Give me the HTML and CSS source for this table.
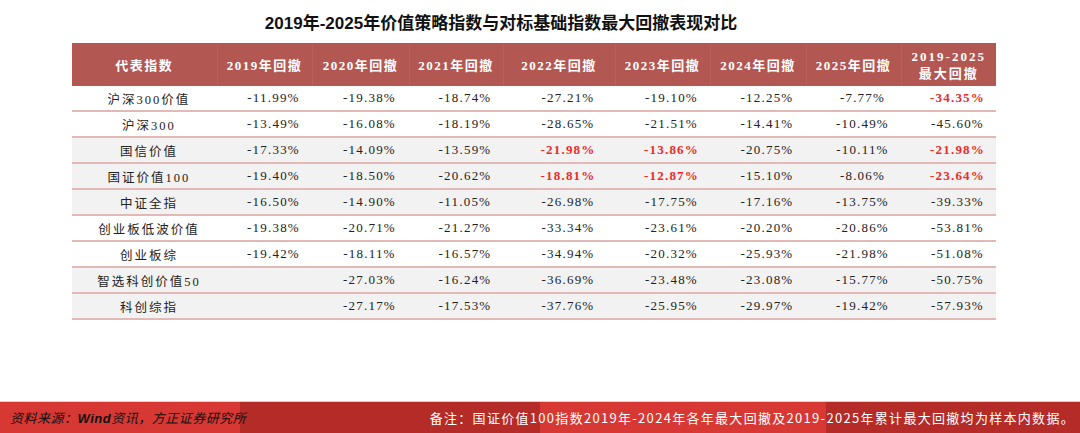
FILE: index.html
```html
<!DOCTYPE html>
<html lang="zh-CN">
<head>
<meta charset="utf-8">
<title>2019年-2025年价值策略指数与对标基础指数最大回撤表现对比</title>
<link rel="stylesheet" href="styles.css">
</head>
<body>
<div class="page">
  <h1 class="title">2019年-2025年价值策略指数与对标基础指数最大回撤表现对比</h1>
  <table class="grid">
    <colgroup>
      <col class="c-name"><col class="c-95"><col class="c-97"><col class="c-94"><col class="c-112"><col class="c-95"><col class="c-96"><col class="c-95"><col class="c-95">
    </colgroup>
    <thead>
      <tr>
        <th>代表指数</th><th>2019年回撤</th><th>2020年回撤</th><th>2021年回撤</th><th>2022年回撤</th><th>2023年回撤</th><th>2024年回撤</th><th>2025年回撤</th><th class="two">2019-2025<br>最大回撤</th>
      </tr>
    </thead>
    <tbody>
      <tr><td>沪深300价值</td><td>-11.99%</td><td>-19.38%</td><td>-18.74%</td><td>-27.21%</td><td>-19.10%</td><td>-12.25%</td><td>-7.77%</td><td class="hot">-34.35%</td></tr>
      <tr><td>沪深300</td><td>-13.49%</td><td>-16.08%</td><td>-18.19%</td><td>-28.65%</td><td>-21.51%</td><td>-14.41%</td><td>-10.49%</td><td>-45.60%</td></tr>
      <tr class="shade"><td>国信价值</td><td>-17.33%</td><td>-14.09%</td><td>-13.59%</td><td class="hot">-21.98%</td><td class="hot">-13.86%</td><td>-20.75%</td><td>-10.11%</td><td class="hot">-21.98%</td></tr>
      <tr class="shade"><td>国证价值100</td><td>-19.40%</td><td>-18.50%</td><td>-20.62%</td><td class="hot">-18.81%</td><td class="hot">-12.87%</td><td>-15.10%</td><td>-8.06%</td><td class="hot">-23.64%</td></tr>
      <tr class="shade"><td>中证全指</td><td>-16.50%</td><td>-14.90%</td><td>-11.05%</td><td>-26.98%</td><td>-17.75%</td><td>-17.16%</td><td>-13.75%</td><td>-39.33%</td></tr>
      <tr><td>创业板低波价值</td><td>-19.38%</td><td>-20.71%</td><td>-21.27%</td><td>-33.34%</td><td>-23.61%</td><td>-20.20%</td><td>-20.86%</td><td>-53.81%</td></tr>
      <tr><td>创业板综</td><td>-19.42%</td><td>-18.11%</td><td>-16.57%</td><td>-34.94%</td><td>-20.32%</td><td>-25.93%</td><td>-21.98%</td><td>-51.08%</td></tr>
      <tr class="shade"><td>智选科创价值50</td><td></td><td>-27.03%</td><td>-16.24%</td><td>-36.69%</td><td>-23.48%</td><td>-23.08%</td><td>-15.77%</td><td>-50.75%</td></tr>
      <tr class="shade"><td>科创综指</td><td></td><td>-27.17%</td><td>-17.53%</td><td>-37.76%</td><td>-25.95%</td><td>-29.97%</td><td>-19.42%</td><td>-57.93%</td></tr>
    </tbody>
  </table>
  <footer class="foot">
    <span class="source">资料来源：<b>Wind</b>资讯，方正证券研究所</span>
    <span class="note">备注：国证价值100指数2019年-2024年各年最大回撤及2019-2025年累计最大回撤均为样本内数据。</span>
  </footer>
</div>
</body>
</html>
```

FILE: styles.css
```css
html, body {
  margin: 0;
  padding: 0;
  background: #ffffff;
}

.page {
  width: 1080px;
  height: 433px;
  display: flex;
  flex-direction: column;
  font-family: "Liberation Serif", "Noto Sans CJK SC", serif;
  color: #222222;
}

.title {
  margin: 0;
  height: 43px;
  padding-right: 78px;
  box-sizing: border-box;
  display: flex;
  align-items: center;
  justify-content: center;
  font-family: "Liberation Sans", "Noto Sans CJK SC", sans-serif;
  font-size: 17px;
  font-weight: 700;
  color: #111111;
  letter-spacing: 0;
}

.grid {
  margin-left: 72px;
  width: 924px;
  border-collapse: collapse;
  table-layout: fixed;
}

.c-name { width: 145px; }
.c-95 { width: 95px; }
.c-97 { width: 97px; }
.c-94 { width: 94px; }
.c-112 { width: 112px; }
.c-96 { width: 96px; }

.grid th {
  height: 43px;
  padding: 0;
  background: #b25752;
  color: #ffffff;
  font-size: 13px;
  font-weight: 700;
  letter-spacing: 1.5px;
  text-align: center;
  vertical-align: middle;
  border-left: 1px solid #b9605b;
}

.grid th:first-child { border-left: none; }

.grid th.two {
  line-height: 17px;
  letter-spacing: 2px;
}

.grid td {
  height: 24px;
  padding: 0 0 0 18px;
  font-size: 13px;
  letter-spacing: 1.2px;
  text-align: center;
  vertical-align: middle;
  border-bottom: 2px solid #e2b9b7;
  white-space: nowrap;
}

.grid td:first-child {
  padding-left: 9px;
  letter-spacing: 2px;
  font-size: 12.5px;
}

.grid tr.shade td { background: #f2f2f2; }

.grid td.hot {
  color: #ee2a28;
  font-weight: 700;
}

.foot {
  margin-top: auto;
  height: 31px;
  border-top: 1px solid #ecc9c7;
  display: flex;
  align-items: center;
  justify-content: space-between;
  padding: 0 5px 0 10px;
  background: linear-gradient(to right, #d83833 0 240px, #b42b27 240px 540px, #d83833 540px 826px, #b42b27 826px);
  font-family: "Noto Sans CJK SC", sans-serif;
  font-size: 13px;
}

.source {
  font-style: italic;
  color: #111111;
  letter-spacing: 0.5px;
}

.source b {
  font-family: "Liberation Sans", sans-serif;
  font-weight: 700;
}

.note {
  color: #ffffff;
  letter-spacing: 1.3px;
}
```
